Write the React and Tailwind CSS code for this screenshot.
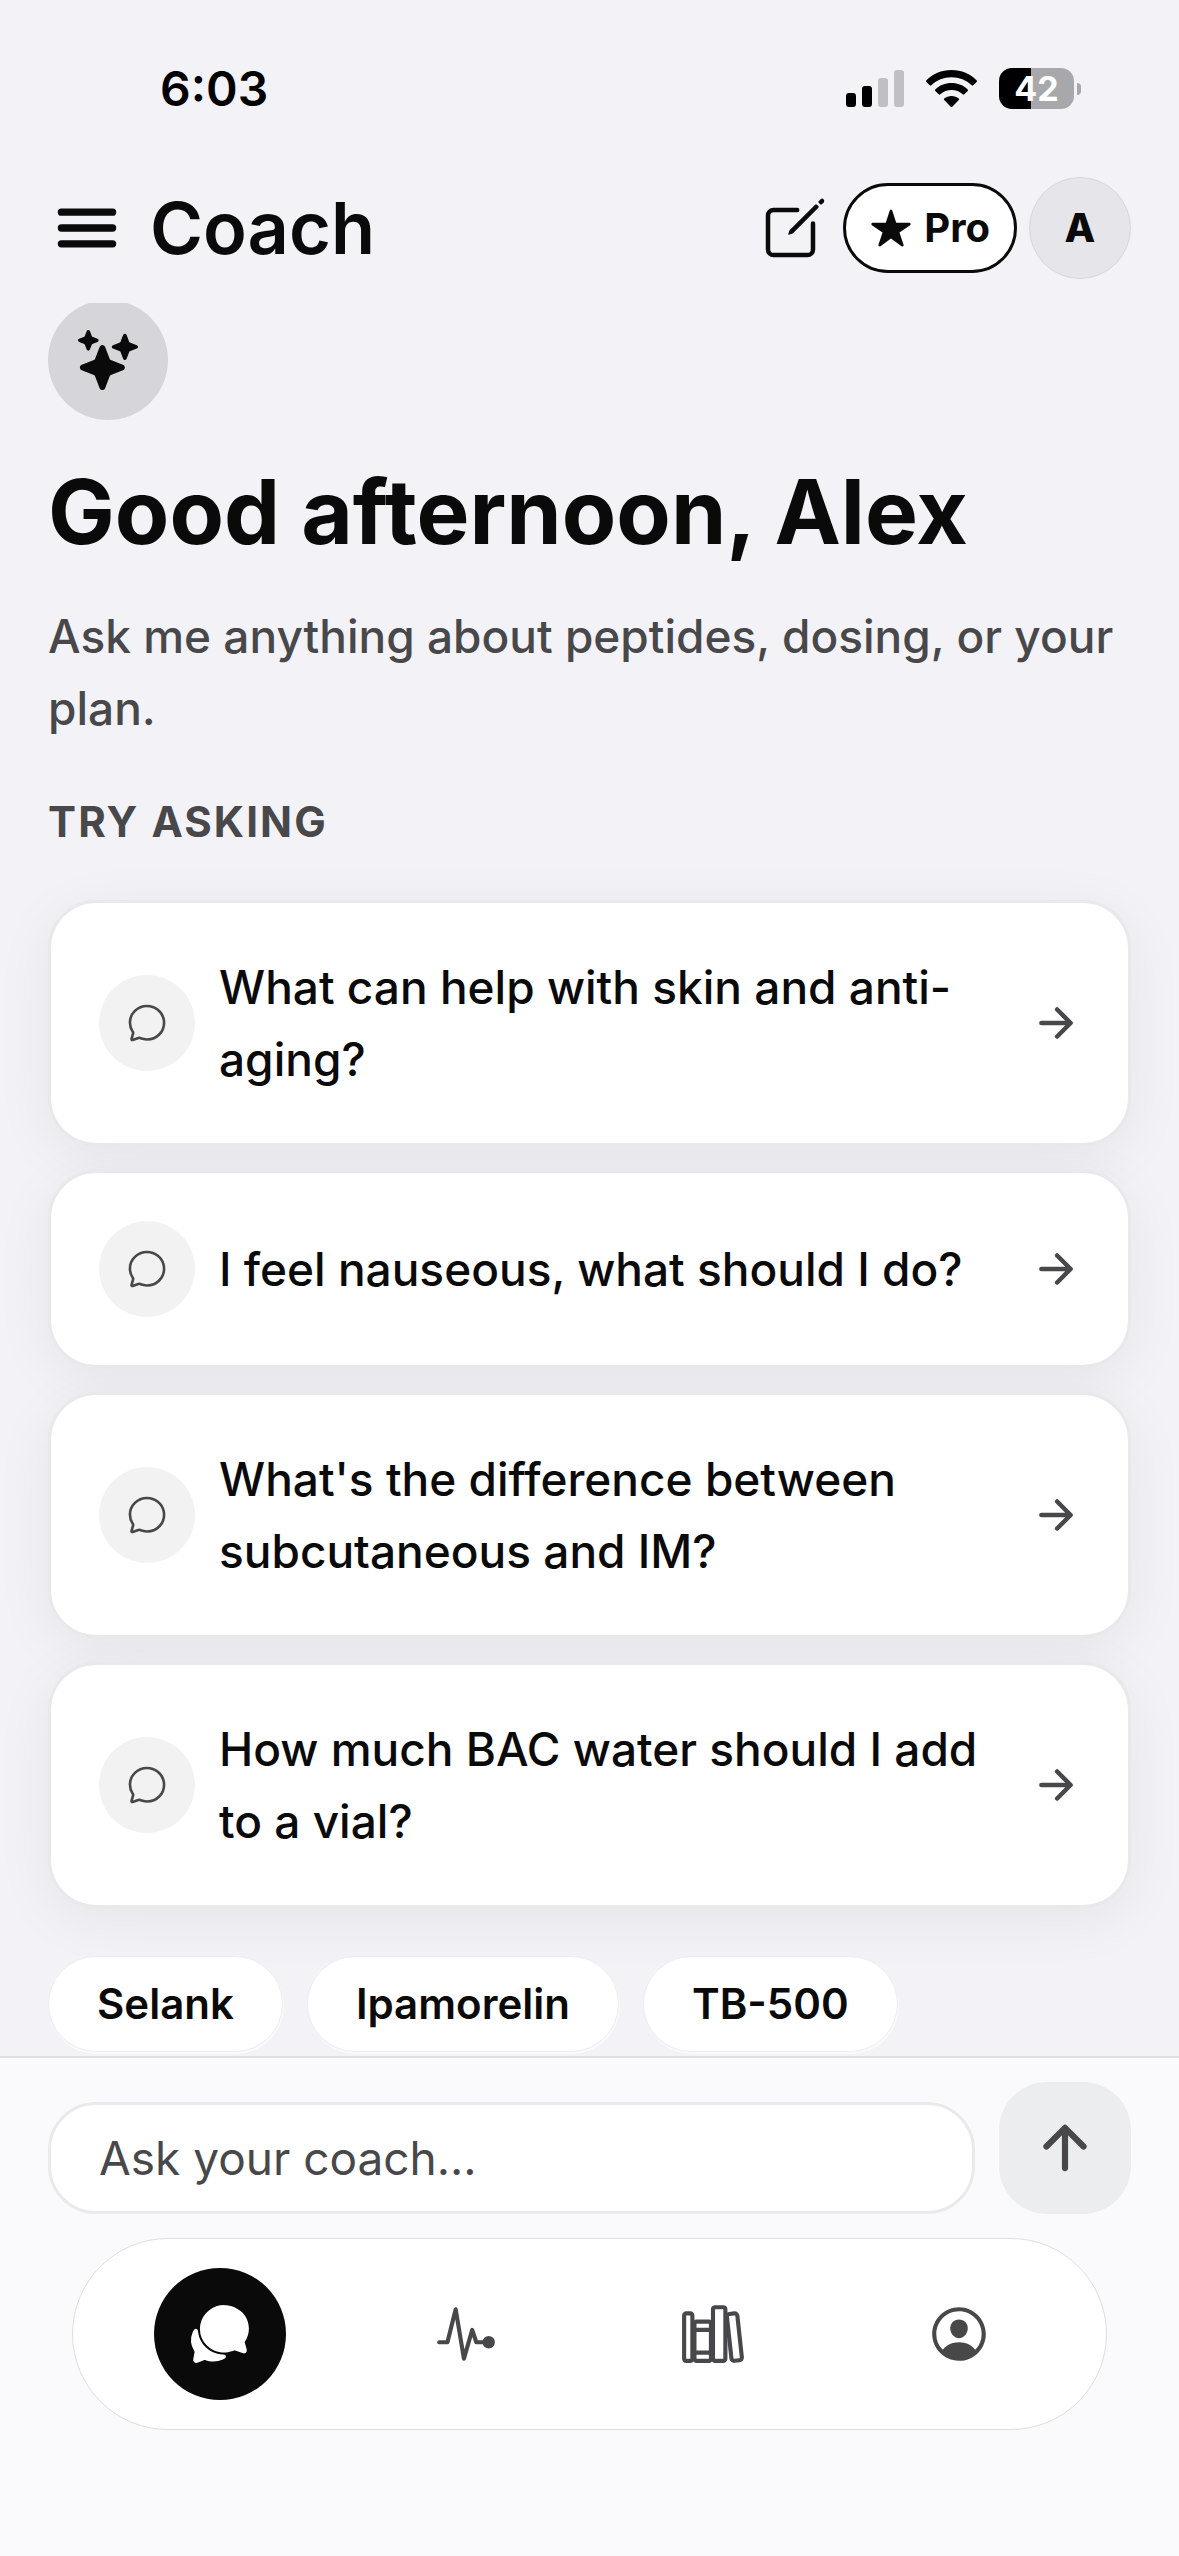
import React, { useState } from "react";
import {
  IoMenu,
  IoCreateOutline,
  IoStar,
  IoSparkles,
  IoChatbubbleOutline,
  IoArrowForward,
  IoArrowUp,
  IoChatbubbles,
  IoLibraryOutline,
  IoPersonCircleOutline,
} from "react-icons/io5";

// pulse line with a solid end dot
const PulseIcon = () => (
  <svg
    width="1em"
    height="1em"
    viewBox="0 0 512 512"
    fill="none"
    stroke="currentColor"
    strokeWidth="32"
    strokeLinecap="round"
    strokeLinejoin="round"
  >
    <path d="M48 320h64l64-256 64 384 64-224 32 96h64" />
    <circle cx="432" cy="320" r="32" fill="currentColor" />
  </svg>
);

const questions = [
  "What can help with skin and anti-aging?",
  "I feel nauseous, what should I do?",
  "What's the difference between subcutaneous and IM?",
  "How much BAC water should I add to a vial?",
];

const peptides = ["Selank", "Ipamorelin", "TB-500"];

const tabs = [
  { name: "Coach", icon: <IoChatbubbles /> },
  { name: "Activity", icon: <PulseIcon /> },
  { name: "Library", icon: <IoLibraryOutline /> },
  { name: "Profile", icon: <IoPersonCircleOutline /> },
];

const StatusBar = () => (
  <div className="h-[177px] pl-40 pr-[98px] flex items-center justify-between text-black">
    <div className="text-5xl font-semibold leading-none">6:03</div>
    <div className="flex items-center gap-[22px]">
      <svg width="58" height="38" viewBox="0 0 58 38">
        <rect x="0" y="23" width="10" height="14" rx="3" />
        <rect x="16" y="16" width="10" height="21" rx="3" />
        <rect x="32" y="8" width="10" height="29" rx="3" fill="#bfbfc4" />
        <rect x="48" y="0" width="10" height="37" rx="3" fill="#bfbfc4" />
      </svg>
      <svg width="51" height="38" viewBox="0 0 51 38">
        <path d="M25.500 0C35.500 0 44.500 4 50.600 10.300Q51.300 11.100 50.600 11.900L47.300 15.200Q46.500 15.900 45.700 15.200C40.300 10.200 33.300 7.300 25.500 7.300S10.700 10.200 5.300 15.200Q4.500 15.900 3.700 15.200L.4 11.900Q-.3 11.100 .4 10.300C6.500 4 15.500 0 25.500 0Z" />
        <path d="M25.500 13C31.800 13 37.500 15.400 41.700 19.400Q42.400 20.200 41.700 20.900L38.300 24.300Q37.500 25 36.700 24.300C33.700 21.600 29.800 20.100 25.500 20.100S17.300 21.600 14.300 24.300Q13.500 25 12.700 24.300L9.300 20.900Q8.600 20.200 9.300 19.400C13.500 15.400 19.200 13 25.500 13Z" />
        <path d="M25.500 26C28.300 26 30.800 27 32.800 28.600Q33.500 29.300 32.800 30L26.300 36.700Q25.500 37.400 24.700 36.700L18.200 30Q17.500 29.300 18.200 28.600C20.200 27 22.700 26 25.500 26Z" />
      </svg>
      <div className="flex items-center gap-[3px]">
        <div className="w-[75px] h-[41px] rounded-[13px] bg-linear-to-r from-black from-43% to-[#a8a8ac] to-43% flex items-center justify-center text-white text-[34px] font-bold leading-none">
          42
        </div>
        <div className="w-1 h-3 rounded-r-full bg-[#a8a8ac]" />
      </div>
    </div>
  </div>
);

const Header = () => (
  <header className="px-12 pb-6 flex items-center justify-between">
    <div className="flex items-center gap-6">
      <button aria-label="Menu" className="text-[78px]">
        <IoMenu />
      </button>
      <h1 className="text-7xl font-semibold leading-none">Coach</h1>
    </div>
    <div className="flex items-center gap-3">
      <button aria-label="New chat" className="text-[72px]">
        <IoCreateOutline />
      </button>
      <button className="h-[90px] px-6 flex items-center gap-3 rounded-full border-3 border-[#0a0a0a] bg-white text-[40px] font-bold leading-none">
        <IoStar className="text-[42px]" />
        Pro
      </button>
      <button className="size-[102px] rounded-full border border-[#d8d8dc] bg-[#e6e5ea] text-[40px] font-extrabold leading-none">
        A
      </button>
    </div>
  </header>
);

const QuestionCard = ({ text, onClick }) => (
  <button
    onClick={onClick}
    className="w-full p-12 flex items-center gap-6 rounded-[48px] border-3 border-[#e9e9eb] bg-white bg-clip-padding text-left shadow-[0_12px_60px_rgba(0,0,0,0.06)]"
  >
    <span className="size-24 shrink-0 rounded-full bg-[#f2f2f2] flex items-center justify-center text-[42px] text-[#48484a]">
      <IoChatbubbleOutline />
    </span>
    <span className="flex-1 text-[46px] leading-[72px] font-medium">
      {text}
    </span>
    <IoArrowForward className="shrink-0 text-5xl text-[#48484a]" />
  </button>
);

const App = () => {
  const [message, setMessage] = useState("");
  const [activeTab, setActiveTab] = useState("Coach");

  const handleSubmit = (e) => {
    e.preventDefault();
    setMessage("");
  };

  return (
    <div className="min-h-screen flex flex-col bg-[#f2f2f7] text-[#0a0a0a] font-['Inter',sans-serif]">
      <StatusBar />
      <Header />

      <main className="flex-1 px-12 overflow-hidden">
        <div className="-mt-[3px] size-[120px] rounded-full bg-[#d6d5da] flex items-center justify-center text-6xl">
          <IoSparkles />
        </div>
        <h2 className="mt-9 text-[89px] leading-[112px] font-bold">
          Good afternoon, Alex
        </h2>
        <p className="mt-8 text-[46px] leading-[72px] font-medium text-[#48484a]">
          Ask me anything about peptides, dosing, or your plan.
        </p>
        <h3 className="mt-12 text-[42px] leading-[60px] font-bold tracking-wider text-[#48484a]">
          TRY ASKING
        </h3>
        <div className="mt-12 flex flex-col gap-6">
          {questions.map((question) => (
            <QuestionCard
              key={question}
              text={question}
              onClick={() => setMessage(question)}
            />
          ))}
        </div>
        <div className="mt-12 flex gap-6">
          {peptides.map((peptide) => (
            <button
              key={peptide}
              onClick={() => setMessage(peptide)}
              className="h-24 px-12 rounded-full border border-[#ededf0] bg-white text-[42px] leading-none font-semibold shadow-[1px_2px_0_#fafafc]"
            >
              {peptide}
            </button>
          ))}
        </div>
      </main>

      <footer className="px-12 pt-6 pb-[126px] border-t-2 border-[#dfdfe2] bg-[#fafafc]">
        <form onSubmit={handleSubmit} className="flex items-end gap-6">
          <input
            type="text"
            aria-label="Ask your coach"
            placeholder="Ask your coach..."
            value={message}
            onChange={(e) => setMessage(e.target.value)}
            className="flex-1 min-w-0 h-28 px-12 rounded-[48px] border-3 border-[#eaeaea] bg-white text-[46px] outline-none placeholder:text-[#48484a]"
          />
          <button
            type="submit"
            aria-label="Send"
            className="size-[132px] rounded-[48px] bg-[#ecedef] flex items-center justify-center text-[66px] text-[#48484a]"
          >
            <IoArrowUp />
          </button>
        </form>
        <nav className="mt-6 mx-6 h-48 px-6 flex items-center rounded-full border border-[#dedede] bg-white">
          {tabs.map((tab) => (
            <div key={tab.name} className="flex-1 flex justify-center">
              <button
                aria-label={tab.name}
                onClick={() => setActiveTab(tab.name)}
                className={`size-[132px] rounded-full flex items-center justify-center text-[66px] ${
                  activeTab === tab.name
                    ? "bg-[#0a0a0a] text-white"
                    : "text-[#48484a]"
                }`}
              >
                {tab.icon}
              </button>
            </div>
          ))}
        </nav>
      </footer>
    </div>
  );
};

export default App;
